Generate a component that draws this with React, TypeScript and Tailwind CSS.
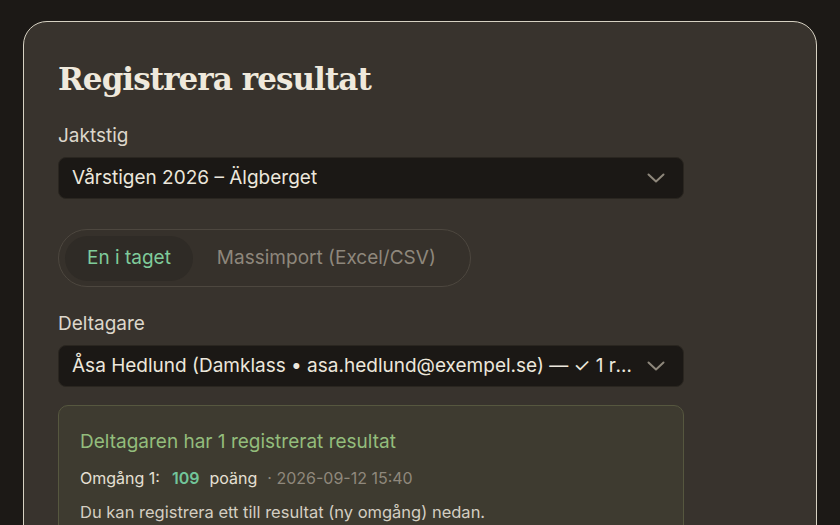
const sans = "font-['Inter','Noto_Sans',sans-serif]";

function Chevron() {
  return (
    <svg width="18" height="10" viewBox="0 0 18 10" className="ml-3 shrink-0" aria-hidden="true">
      <path d="M1.5 1.5 L9 8.5 L16.5 1.5" fill="none" stroke="#8e877b" strokeWidth="2" strokeLinecap="round" strokeLinejoin="round" />
    </svg>
  );
}

function SelectBox({ value }: { value: string }) {
  return (
    <div className="flex h-[42px] w-[626px] items-center justify-between rounded-[8px] border border-[#2a2620] bg-[#1b1815] pl-[13px] pr-[18px]">
      <span className="truncate text-[19px] text-[#ece7dc]">{value}</span>
      <Chevron />
    </div>
  );
}

export default function App() {
  return (
    <div className={`${sans} h-[525px] w-[840px] overflow-hidden bg-[#1c1916] pl-[23px] pr-[23px] pt-[21px]`}>
      <div className="h-[600px] rounded-[24px] border-[1.5px] border-[#d6d1c2] bg-[#38332d] px-[34px] pt-[35px]">
        <h1 className="font-['DejaVu_Serif',serif] text-[31px] font-bold leading-[44px] tracking-[-0.03em] text-[#efe9dc]">
          Registrera resultat
        </h1>

        <div className="mt-[22px] text-[19px] leading-[26px] text-[#ddd7cb]">Jaktstig</div>
        <div className="mt-[8px]">
          <SelectBox value="Vårstigen 2026 – Älgberget" />
        </div>

        <div className="mt-[30px] inline-flex h-[58px] items-center gap-[24px] rounded-full border border-[#4d473f] bg-[#36312b] px-[6px]">
          <div className="flex h-[45px] items-center rounded-full bg-[#2f2b26] px-[22px] text-[19px] text-[#7fcb9b]">
            En i taget
          </div>
          <div className="pr-[28px] text-[19px] text-[#8e877c]">Massimport (Excel/CSV)</div>
        </div>

        <div className="mt-[24px] text-[19px] leading-[26px] text-[#ddd7cb]">Deltagare</div>
        <div className="mt-[8px]">
          <SelectBox value="Åsa Hedlund (Damklass • asa.hedlund@exempel.se) — ✓ 1 registrerat resultat" />
        </div>

        <div className="mt-[18px] w-[626px] rounded-[10px] border border-[#56573f] bg-[#3e3b30] px-[21px] pb-[40px] pt-[23px]">
          <div className="text-[19px] leading-[26px] text-[#93bd7c]">Deltagaren har 1 registrerat resultat</div>
          <div className="mt-[11px] flex items-baseline text-[16px] leading-[24px]">
            <span className="text-[#e6e0d4]">Omgång 1:</span>
            <span className="ml-[12px] font-semibold text-[#72c59a]">109</span>
            <span className="ml-[10px] text-[#e6e0d4]">poäng</span>
            <span className="ml-[10px] text-[#8f887c]">· 2026-09-12 15:40</span>
          </div>
          <div className="mt-[10px] text-[16.5px] leading-[24px] text-[#d4cec2]">
            Du kan registrera ett till resultat (ny omgång) nedan.
          </div>
        </div>
      </div>
    </div>
  );
}
